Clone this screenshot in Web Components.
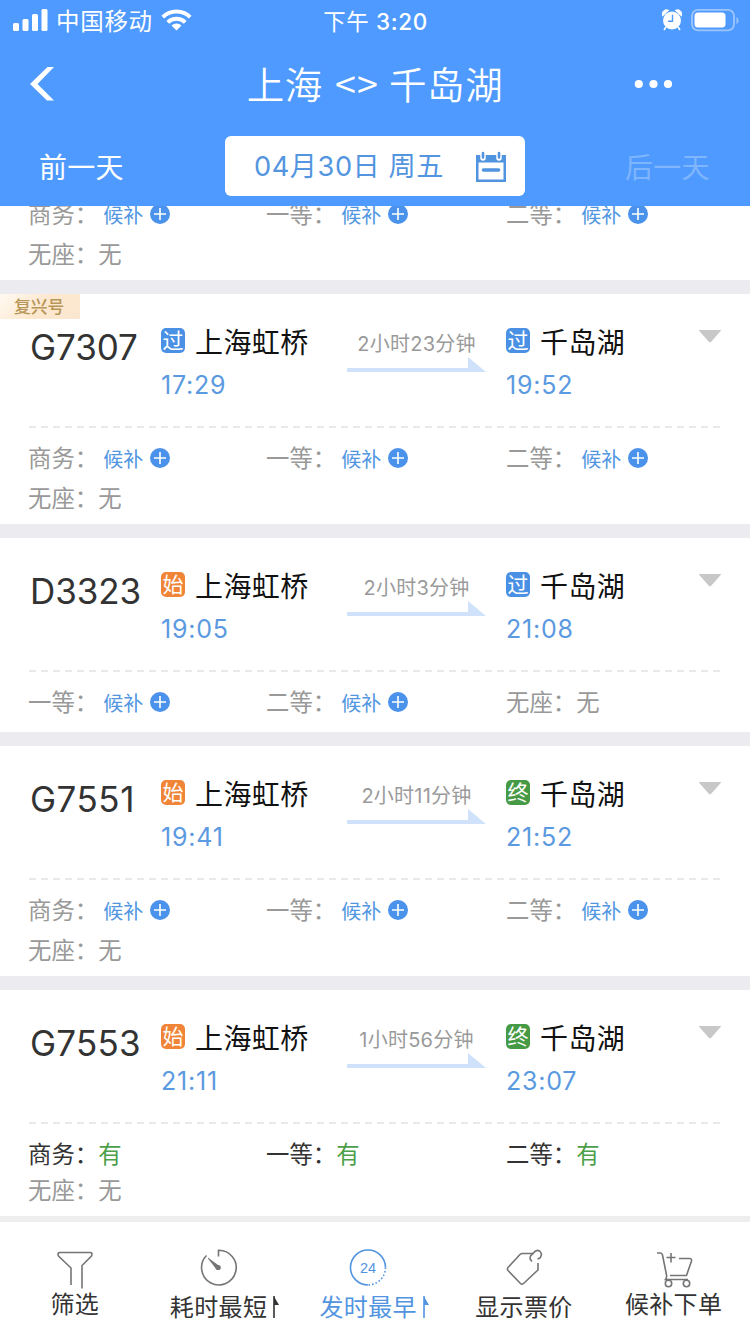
<!DOCTYPE html>
<html lang="zh-CN">
<head>
<meta charset="utf-8">
<title>上海 - 千岛湖</title>
<style>
html,body{margin:0;padding:0}
body{width:750px;height:1334px;overflow:hidden;background:#fff;font-family:Inter,"Noto Sans CJK SC",sans-serif;color:#333}
</style>
</head>
<body>
<ticket-app>
  <status-bar slot="head"></status-bar>
  <title-bar slot="head"></title-bar>
  <date-bar slot="head"></date-bar>

  <train-card compact style="--h:74px">
    <seat-item kind="wait" label="商务"></seat-item><seat-item kind="wait" label="一等"></seat-item><seat-item kind="wait" label="二等"></seat-item>
    <seat-item kind="none" label="无座"></seat-item>
  </train-card>

  <train-card no="G7307" span="2小时23分钟" fuxing style="--h:230px">
    <train-stop slot="from" tag="过" time="17:29">上海虹桥</train-stop>
    <train-stop slot="to" tag="过" time="19:52">千岛湖</train-stop>
    <seat-item kind="wait" label="商务"></seat-item><seat-item kind="wait" label="一等"></seat-item><seat-item kind="wait" label="二等"></seat-item>
    <seat-item kind="none" label="无座"></seat-item>
  </train-card>

  <train-card no="D3323" span="2小时3分钟" style="--h:194px">
    <train-stop slot="from" tag="始" time="19:05">上海虹桥</train-stop>
    <train-stop slot="to" tag="过" time="21:08">千岛湖</train-stop>
    <seat-item kind="wait" label="一等"></seat-item><seat-item kind="wait" label="二等"></seat-item><seat-item kind="none" label="无座"></seat-item>
  </train-card>

  <train-card no="G7551" span="2小时11分钟" style="--h:230px;--no-ls:.5px">
    <train-stop slot="from" tag="始" time="19:41">上海虹桥</train-stop>
    <train-stop slot="to" tag="终" time="21:52">千岛湖</train-stop>
    <seat-item kind="wait" label="商务"></seat-item><seat-item kind="wait" label="一等"></seat-item><seat-item kind="wait" label="二等"></seat-item>
    <seat-item kind="none" label="无座"></seat-item>
  </train-card>

  <train-card no="G7553" span="1小时56分钟" style="--h:226px;--row:36px;--seat-top:11px;--no-ls:.2px">
    <train-stop slot="from" tag="始" time="21:11">上海虹桥</train-stop>
    <train-stop slot="to" tag="终" time="23:07">千岛湖</train-stop>
    <seat-item kind="have" label="商务"></seat-item><seat-item kind="have" label="一等"></seat-item><seat-item kind="have" label="二等"></seat-item>
    <seat-item kind="none" label="无座"></seat-item>
  </train-card>

  <tool-item slot="foot" icon="funnel" raised>筛选</tool-item>
  <tool-item slot="foot" icon="timer" flag style="--pull:14px">耗时最短</tool-item>
  <tool-item slot="foot" icon="clock" flag active style="--pull:12px">发时最早</tool-item>
  <tool-item slot="foot" icon="tag">显示票价</tool-item>
  <tool-item slot="foot" icon="cart" raised>候补下单</tool-item>
</ticket-app>

<script>
const define = (name, render) => customElements.define(name, class extends HTMLElement {
  constructor() { super(); this.attachShadow({ mode: 'open' }); }
  connectedCallback() {
    const t = document.createElement('template');
    t.innerHTML = render(this);
    this.shadowRoot.replaceChildren(t.content.cloneNode(true));
  }
});

define('ticket-app', () => `
<style>
:host{display:flex;flex-direction:column;width:750px;height:1334px}
header{height:206px;flex:none;background:#4f9afe;color:#fff}
main{height:1010px;flex:none;overflow:hidden;background:#ebebf0;display:flex;flex-direction:column;gap:14px}
footer{height:112px;flex:none;border-top:6px solid #eee;background:#fff;display:grid;grid-template-columns:repeat(5,149.7px)}
</style>
<header><slot name="head"></slot></header>
<main><slot></slot></main>
<footer><slot name="foot"></slot></footer>`);

define('status-bar', () => `
<style>
:host{display:grid;grid-template-columns:1fr auto 1fr;align-items:center;height:40px;padding:0 12px 0 13px;font-size:23.5px;line-height:40px}
.l,.r{display:flex;align-items:center}
.r{justify-content:flex-end}
.sig{margin-right:7px}
.wifi{margin-left:8px}
.time{font-weight:500;font-size:22.5px;letter-spacing:.6px;padding-top:3px;line-height:37px}
.cn{letter-spacing:.6px;font-weight:400}
.op{letter-spacing:.7px;padding-top:3px;line-height:37px}
</style>
<div class="l">
<svg class="sig" width="36" height="24" viewBox="0 0 36 24" fill="#fff"><rect x="0" y="15" width="6" height="8" rx="1.5"/><rect x="9.5" y="11" width="6" height="12" rx="1.5"/><rect x="19" y="6" width="6" height="17" rx="1.5"/><rect x="28.5" y="1" width="6" height="22" rx="1.5"/></svg>
<span class="op">中国移动</span>
<svg class="wifi" width="31" height="24" viewBox="0 0 31 24" fill="none" stroke="#fff" stroke-width="4"><path d="M1.8 9.2a19.5 19.5 0 0 1 27.4 0"/><path d="M6.8 14.4a12.4 12.4 0 0 1 17.4 0"/><path d="M15.5 22.5l-5-5a7 7 0 0 1 10 0z" fill="#fff" stroke="none"/></svg>
</div>
<div class="time"><span class="cn">下午</span> 3:20</div>
<div class="r">
<svg width="20" height="22" viewBox="0 0 20 22"><circle cx="10" cy="11.5" r="9" fill="#fff"/><path d="M.8 6.2A4 4 0 0 1 6 1.4zM19.2 6.2A4 4 0 0 0 14 1.4zM4 18l-2 3M16 18l2 3" fill="#fff" stroke="#fff" stroke-width="1.6"/><path d="M10.5 5.8v6.4H6" fill="none" stroke="#4f9afe" stroke-width="1.4"/></svg>
<svg style="margin:0 -2px 0 8px" width="50" height="24" viewBox="0 0 50 24"><rect x="2" y="1.8" width="42" height="20.5" rx="6" fill="none" stroke="#9cc6fb" stroke-width="1.8"/><rect x="4.500" y="4.500" width="31" height="15" rx="3.500" fill="#fff"/><path d="M46.500 9a4 4 0 0 1 0 7z" fill="#9cc6fb"/></svg>
</div>`);

define('title-bar', () => `
<style>
:host{display:grid;grid-template-columns:150px 1fr 150px;align-items:center;height:88px}
h1{margin:0;font-weight:350;font-size:37.5px;line-height:86px;padding-top:3px;height:85px;text-align:center;white-space:pre;letter-spacing:.6px}
i{font-style:normal;font-family:"Noto Sans CJK SC",sans-serif;font-size:38px;line-height:40px;font-weight:350;letter-spacing:1px;margin:0 -1px 0 1px}
.back{margin-left:29px}
.more{margin-left:34px}
</style>
<svg class="back" width="26" height="36" viewBox="0 0 26 36" fill="#fff"><path d="M18.500 1H25L8.500 18L25 34.500H18L1 18z"/></svg>
<h1>上海 <i>&lt;&gt;</i> 千岛湖</h1>
<svg class="more" width="40" height="10" viewBox="0 0 40 10" fill="#fff"><circle cx="4.800" cy="5" r="4.100"/><circle cx="19.500" cy="5" r="4.100"/><circle cx="34" cy="5" r="4.100"/></svg>`);

define('date-bar', () => `
<style>
:host{display:grid;grid-template-columns:225px 300px 225px;height:60px;padding-top:8px;line-height:60px;font-size:28px;letter-spacing:.3px}
.prev{padding:2px 0 0 39px}
.next{padding:2px 0 0 100px;color:#7eb5fd}
.pick{background:#fff;border-radius:6px;color:#5395df;display:flex;align-items:center;justify-content:space-between;padding:0 18.500px 0 29px;letter-spacing:.55px;font-size:27.2px;height:60px}
.pick span{padding-top:2px}
.pick svg{margin-top:1px}
</style>
<div class="prev">前一天</div>
<div class="pick"><span>04月30日 周五</span>
<svg width="32" height="32" viewBox="0 0 32 32"><path d="M1 4h30v27H1z" fill="#5094df"/><path d="M3.500 11.500h25v17h-25z" fill="#fff"/><path d="M8.500 19h15" stroke="#5094df" stroke-width="3.600" stroke-linecap="round"/><path d="M8 3v4M24 3v4" stroke="#fff" stroke-width="5.500" stroke-linecap="round"/><path d="M8 2v4.500M24 2v4.500" stroke="#5094df" stroke-width="2.600" stroke-linecap="round"/></svg></div>
<div class="next">后一天</div>`);

define('train-card', el => `
<style>
:host{display:block;position:relative;flex:none;height:var(--h);background:#fff;overflow:hidden}
.trip{display:grid;grid-template-columns:135px 185px 141px 192px 24px;height:132px;padding:0 0 0 26px}
.trip>*{min-width:0}
.no{font-size:35px;line-height:44px;padding:31px 0 0 4px;letter-spacing:var(--no-ls,-.1px);color:#333;font-weight:400;white-space:nowrap}
.span{padding-top:36px;text-align:center;font-size:20px;line-height:28px;color:#9a9a9a;letter-spacing:.25px}
.span svg{display:block;margin-top:-1px}
.caret{margin:36px 0 0 19px;justify-self:start}
.line{height:2px;margin:0 29px;background:repeating-linear-gradient(90deg,#e9e9e9 0 7px,transparent 7px 12px)}
.seats{display:grid;grid-template-columns:238px 240px 1fr;grid-auto-rows:var(--row,40px);padding:var(--seat-top,9px) 0 0 28px}
:host([compact]) .seats{padding-top:0;margin-top:-13px}
.fx{position:absolute;left:0;top:0;width:80px;height:25px;box-sizing:border-box;padding-left:14px;font-size:16.800px;line-height:26px;font-weight:500;color:#b79657;background:linear-gradient(135deg,#fffaf2,#fde8cf 50%,#fbe6d0)}
</style>
${el.hasAttribute('fuxing') ? '<div class="fx">复兴号</div>' : ''}
${el.hasAttribute('compact') ? '' : `<div class="trip">
<div class="no">${el.getAttribute('no')}</div>
<slot name="from"></slot>
<div class="span">${el.getAttribute('span')}<svg width="141" height="16" viewBox="0 0 141 16"><path d="M1 11H122V0L140 15H1z" fill="#cfe2fa"/></svg></div>
<slot name="to"></slot>
<svg class="caret" width="24" height="13" viewBox="0 0 24 13"><path d="M1.500 0h21q1 0 .2.900l-9.500 10.800q-1.200 1.200-2.400 0L1.300.900Q.5 0 1.500 0z" fill="#c8c8c8"/></svg>
</div><div class="line"></div>`}
<div class="seats"><slot></slot></div>`);

const tagColors = { '过': '#4a90e4', '始': '#f08437', '终': '#469a46' };
define('train-stop', el => `
<style>
:host{display:block;padding-top:32px}
:host([slot=to]){padding-left:19px}
.n{display:flex;align-items:center;font-size:28px;line-height:34px;color:#111;letter-spacing:.4px;white-space:nowrap}
.n slot{display:block;padding-top:1px;line-height:33px}
b{width:24px;height:25px;border-radius:5px;font-weight:400;font-size:21px;line-height:25px;text-align:center;letter-spacing:0;color:#fff;margin-right:10px;position:relative;top:-3px;background:${tagColors[el.getAttribute('tag')]}}
.t{font-size:25px;line-height:34px;margin-top:8px;color:#5b9ae0;letter-spacing:.8px}
</style>
<div class="n"><b>${el.getAttribute('tag')}</b><slot></slot></div>
<div class="t">${el.getAttribute('time')}</div>`);

define('seat-item', el => {
  const kind = el.getAttribute('kind');
  const value = kind === 'wait'
    ? `<span class="w">候补</span><svg width="20" height="20" viewBox="0 0 20 20"><circle cx="10" cy="10" r="10" fill="#4a92ea"/><path d="M10 4v12M4 10h12" stroke="#fff" stroke-width="1.600"/></svg>`
    : kind === 'have' ? '<span class="y">有</span>' : '<span>无</span>';
  return `
<style>
:host{display:flex;align-items:center;font-size:23.400px;color:#999;white-space:nowrap}
:host([kind=have]){color:#333}
.w{font-size:20px;color:#5296e2;margin:2px 7px 0 5px}
svg{margin:2px 0 0}
.y{color:#4d9f49}
</style>
<span>${el.getAttribute('label')}：</span>${value}`;
});

const icons = {
  funnel: '<path d="M15 41V24L2.500 12Q1 8.500 4 8.500H34Q37 8.500 35.500 12L26 21.500V44.500"/>',
  timer: '<path d="M19.500 12.500V6.300A17.300 17.300 0 1 1 7.500 11.500"/><path d="M9 14L20.500 22.500 17.500 25z" fill="currentColor" stroke-width=".8"/><circle cx="19.200" cy="23.500" r="1.800" fill="currentColor"/>',
  clock: '<path d="M19 41A17.500 17.500 0 1 1 36.500 23.500"/><path d="M36.500 23.500A17.500 17.500 0 0 1 19 41" stroke-dasharray="1.600 2"/><text x="19" y="28.500" text-anchor="middle" font-size="14.500" font-family="Liberation Sans" fill="currentColor" stroke="none">24</text>',
  tag: '<path d="M28 9.500H17.500Q16 9.500 15 10.500L3 23.500Q1.800 25 3 26.500L15.500 39.500Q17 41 18.500 39.500L33 26V19"/><path d="M27 17.500Q22.500 13.500 28 9.500Q31 5 34.500 7Q38 10 35 14L32.500 15"/>',
  cart: '<path d="M2 9H5.500Q7 9 7.500 11L11.500 31Q12 33.500 10.500 35.500H33M15 31.500H31.500L36.500 17Q37 14.500 34.500 14.500H24M11.500 13.500H20.500M16 9V18.500"/><circle cx="13.500" cy="39.500" r="3.200"/><circle cx="31.500" cy="39.500" r="3.200"/>'
};
define('tool-item', el => `
<style>
:host{display:flex;flex-direction:column;align-items:center;padding-top:22px;color:#333}
:host([active]){color:#5294df}
.i{color:#757575;display:block;overflow:visible;margin-right:var(--pull,0)}
:host([active]) .i{color:#5294df}
.t{display:flex;align-items:center;font-size:24px;line-height:34px;margin-top:1px;letter-spacing:.35px;white-space:nowrap}
.t svg{margin-top:-2px}
:host([raised]) .t{margin-top:-2px}
</style>
<svg class="i" width="38" height="46" viewBox="0 0 38 46" fill="none" stroke="currentColor" stroke-width="1.600">${icons[el.getAttribute('icon')]}</svg>
<div class="t"><slot></slot>${el.hasAttribute('flag') ? '<svg width="12" height="24" viewBox="0 0 12 24"><path d="M7 1V23" stroke="currentColor" stroke-width="1.600"/><path d="M7 1.500L12 10H7z" fill="currentColor"/></svg>' : ''}</div>`);
</script>
</body>
</html>
